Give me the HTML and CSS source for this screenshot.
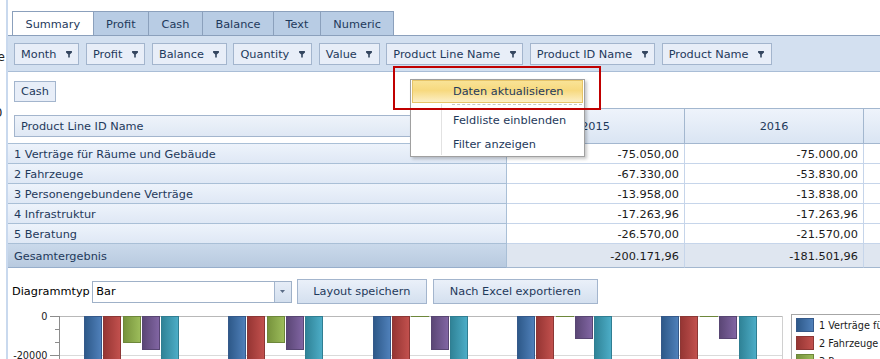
FILE: index.html
```html
<!DOCTYPE html>
<html lang="de">
<head>
<meta charset="utf-8">
<title>Pivot Grid</title>
<link rel="stylesheet" href="styles.css">
</head>
<body>
<div class="page">
  <div class="side-clip">
    <div class="clip-a">Preise</div>
    <div class="clip-b">100</div>
  </div>
  <div class="main">
    <div class="tabs">
      <div class="tab active">Summary</div>
      <div class="tab">Profit</div>
      <div class="tab">Cash</div>
      <div class="tab">Balance</div>
      <div class="tab tab-text">Text</div>
      <div class="tab">Numeric</div>
    </div>
    <div class="filters">
      <div class="field">Month <svg class="funnel" viewBox="0 0 6 7"><path d="M0 .5Q0 0 .5 0H5.5Q6 0 6 .5V1.6L3.8 3.4V6.6H2.2V3.4L0 1.6Z"/></svg></div>
      <div class="field">Profit <svg class="funnel" viewBox="0 0 6 7"><path d="M0 .5Q0 0 .5 0H5.5Q6 0 6 .5V1.6L3.8 3.4V6.6H2.2V3.4L0 1.6Z"/></svg></div>
      <div class="field">Balance <svg class="funnel" viewBox="0 0 6 7"><path d="M0 .5Q0 0 .5 0H5.5Q6 0 6 .5V1.6L3.8 3.4V6.6H2.2V3.4L0 1.6Z"/></svg></div>
      <div class="field">Quantity <svg class="funnel" viewBox="0 0 6 7"><path d="M0 .5Q0 0 .5 0H5.5Q6 0 6 .5V1.6L3.8 3.4V6.6H2.2V3.4L0 1.6Z"/></svg></div>
      <div class="field">Value <svg class="funnel" viewBox="0 0 6 7"><path d="M0 .5Q0 0 .5 0H5.5Q6 0 6 .5V1.6L3.8 3.4V6.6H2.2V3.4L0 1.6Z"/></svg></div>
      <div class="field">Product Line Name <svg class="funnel" viewBox="0 0 6 7"><path d="M0 .5Q0 0 .5 0H5.5Q6 0 6 .5V1.6L3.8 3.4V6.6H2.2V3.4L0 1.6Z"/></svg></div>
      <div class="field">Product ID Name <svg class="funnel" viewBox="0 0 6 7"><path d="M0 .5Q0 0 .5 0H5.5Q6 0 6 .5V1.6L3.8 3.4V6.6H2.2V3.4L0 1.6Z"/></svg></div>
      <div class="field">Product Name <svg class="funnel" viewBox="0 0 6 7"><path d="M0 .5Q0 0 .5 0H5.5Q6 0 6 .5V1.6L3.8 3.4V6.6H2.2V3.4L0 1.6Z"/></svg></div>
    </div>
    <div class="pivot-area">
      <div class="data-fields"><div class="field data-field">Cash</div></div>
      <table class="pivot">
        <colgroup><col class="c-row"><col class="c-val"><col class="c-val2"><col class="c-rest"></colgroup>
        <thead>
          <tr>
            <th class="row-field-cell"><div class="field row-field">Product Line ID Name</div></th>
            <th class="col-head">2015</th>
            <th class="col-head">2016</th>
            <th class="col-head"></th>
          </tr>
        </thead>
        <tbody>
          <tr><th>1 Verträge für Räume und Gebäude</th><td>-75.050,00</td><td>-75.000,00</td><td></td></tr>
          <tr><th>2 Fahrzeuge</th><td>-67.330,00</td><td>-53.830,00</td><td></td></tr>
          <tr><th>3 Personengebundene Verträge</th><td>-13.958,00</td><td>-13.838,00</td><td></td></tr>
          <tr><th>4 Infrastruktur</th><td>-17.263,96</td><td>-17.263,96</td><td></td></tr>
          <tr><th>5 Beratung</th><td>-26.570,00</td><td>-21.570,00</td><td></td></tr>
          <tr class="total"><th>Gesamtergebnis</th><td>-200.171,96</td><td>-181.501,96</td><td></td></tr>
        </tbody>
      </table>
    </div>
    <div class="chart-toolbar">
      <span class="tb-label">Diagrammtyp</span>
      <div class="select">
        <span class="select-value">Bar</span>
        <span class="select-btn"><svg width="5" height="3" viewBox="0 0 5 3"><path d="M0 0H5L2.5 3Z" fill="#5a6c86"/></svg></span>
      </div>
      <div class="btn btn-layout">Layout speichern</div>
      <div class="btn btn-excel">Nach Excel exportieren</div>
    </div>
    <svg class="chart" width="872" height="60" viewBox="8 306 872 60">
      <defs>
        <linearGradient id="gb" x1="0" x2="1" y1="0" y2="0"><stop offset="0" stop-color="#2d5888"/><stop offset="1" stop-color="#5081bb"/></linearGradient>
        <linearGradient id="gr" x1="0" x2="1" y1="0" y2="0"><stop offset="0" stop-color="#953533"/><stop offset="1" stop-color="#c3514e"/></linearGradient>
        <linearGradient id="gg" x1="0" x2="1" y1="0" y2="0"><stop offset="0" stop-color="#76923c"/><stop offset="1" stop-color="#9dbd5b"/></linearGradient>
        <linearGradient id="gp" x1="0" x2="1" y1="0" y2="0"><stop offset="0" stop-color="#5a4675"/><stop offset="1" stop-color="#8266a4"/></linearGradient>
        <linearGradient id="gt" x1="0" x2="1" y1="0" y2="0"><stop offset="0" stop-color="#2f8296"/><stop offset="1" stop-color="#4daec8"/></linearGradient>
      </defs>
      <g class="axis">
        <line x1="60" y1="316.5" x2="782" y2="316.5" stroke="#b8b8b8"/>
        <line x1="60" y1="355.5" x2="782" y2="355.5" stroke="#dadada"/>
        <line x1="782.5" y1="316" x2="782.5" y2="370" stroke="#d0d0d0"/>
        <line x1="59.5" y1="316" x2="59.5" y2="370" stroke="#8c8c8c"/>
        <line x1="50" y1="316.5" x2="60" y2="316.5" stroke="#8c8c8c"/>
        <line x1="50" y1="355.5" x2="60" y2="355.5" stroke="#8c8c8c"/>
        <line x1="55" y1="329.5" x2="60" y2="329.5" stroke="#8c8c8c"/>
        <line x1="55" y1="342.5" x2="60" y2="342.5" stroke="#8c8c8c"/>
        <text x="47.5" y="319.5" text-anchor="end" class="ax">0</text>
        <text x="47.5" y="358.5" text-anchor="end" class="ax">-20000</text>
      </g>
      <g class="bars">
        <rect x="84.5" y="316.5" width="17" height="60" fill="url(#gb)" stroke="#35598a"/>
        <rect x="103.5" y="316.5" width="17" height="60" fill="url(#gr)" stroke="#8c3735"/>
        <rect x="123.5" y="316.5" width="17" height="26" fill="url(#gg)" stroke="#6d873a"/>
        <rect x="142.5" y="316.5" width="17" height="33" fill="url(#gp)" stroke="#584673"/>
        <rect x="161.5" y="316.5" width="17" height="60" fill="url(#gt)" stroke="#307e92"/>

        <rect x="228.5" y="316.5" width="17" height="60" fill="url(#gb)" stroke="#35598a"/>
        <rect x="247.5" y="316.5" width="17" height="60" fill="url(#gr)" stroke="#8c3735"/>
        <rect x="267.5" y="316.5" width="17" height="26" fill="url(#gg)" stroke="#6d873a"/>
        <rect x="286.5" y="316.5" width="17" height="33" fill="url(#gp)" stroke="#584673"/>
        <rect x="305.5" y="316.5" width="17" height="43" fill="url(#gt)" stroke="#307e92"/>

        <rect x="373.5" y="316.5" width="17" height="60" fill="url(#gb)" stroke="#35598a"/>
        <rect x="392.5" y="316.5" width="17" height="60" fill="url(#gr)" stroke="#8c3735"/>
        <line x1="411" y1="316.5" x2="429" y2="316.5" stroke="#6d873a"/>
        <rect x="431.5" y="316.5" width="17" height="33" fill="url(#gp)" stroke="#584673"/>
        <rect x="450.5" y="316.5" width="17" height="60" fill="url(#gt)" stroke="#307e92"/>

        <rect x="517.5" y="316.5" width="17" height="60" fill="url(#gb)" stroke="#35598a"/>
        <rect x="536.5" y="316.5" width="17" height="60" fill="url(#gr)" stroke="#8c3735"/>
        <line x1="556" y1="316.5" x2="574" y2="316.5" stroke="#6d873a"/>
        <rect x="575.5" y="316.5" width="17" height="22" fill="url(#gp)" stroke="#584673"/>
        <rect x="594.5" y="316.5" width="17" height="60" fill="url(#gt)" stroke="#307e92"/>

        <rect x="661.5" y="316.5" width="17" height="60" fill="url(#gb)" stroke="#35598a"/>
        <rect x="680.5" y="316.5" width="17" height="60" fill="url(#gr)" stroke="#8c3735"/>
        <line x1="700" y1="316.5" x2="718" y2="316.5" stroke="#6d873a"/>
        <rect x="719.5" y="316.5" width="17" height="22" fill="url(#gp)" stroke="#584673"/>
        <rect x="739.5" y="316.5" width="17" height="60" fill="url(#gt)" stroke="#307e92"/>
      </g>
      <g class="legend">
        <rect x="791.5" y="314.5" width="120" height="80" fill="#fff" stroke="#a6a6a6"/>
        <rect x="796.5" y="318.5" width="17" height="13" fill="url(#gb)" stroke="#35598a"/>
        <text x="819" y="329" class="lg">1 Verträge für Räume und Gebäude</text>
        <rect x="796.5" y="336.5" width="17" height="13" fill="url(#gr)" stroke="#8c3735"/>
        <text x="819" y="347" class="lg">2 Fahrzeuge</text>
        <rect x="796.5" y="354.5" width="17" height="13" fill="url(#gg)" stroke="#6d873a"/>
        <text x="819" y="365" class="lg">3 Personengebundene Verträge</text>
      </g>
    </svg>
  </div>
  <div class="context-menu">
    <div class="menu-item hot">Daten aktualisieren</div>
    <div class="menu-sep"></div>
    <div class="menu-item">Feldliste einblenden</div>
    <div class="menu-item">Filter anzeigen</div>
  </div>
  <div class="annotation"></div>
</div>
</body>
</html>
```

FILE: styles.css
```css
* { box-sizing: border-box; }
html, body { margin: 0; padding: 0; overflow: hidden; background: #fff; }
body {
  font-family: "DejaVu Sans", Verdana, sans-serif;
  font-size: 11.3px;
  color: #1e395b;
}
.page {
  position: relative;
  display: flex;
  width: 880px;
  height: 359px;
  overflow: hidden;
}
.side-clip {
  flex: none;
  width: 6px;
  overflow: hidden;
  direction: rtl;
  font-size: 12px;
  line-height: 16px;
  color: #222;
  white-space: nowrap;
}
.clip-a { margin-top: 49px; padding-right: 1px; }
.clip-b { margin-top: 40px; padding-right: 3.5px; }

.main {
  flex: 1;
  min-width: 0;
  border-left: 2px solid #c9d9ee;
  padding-top: 11px;
  overflow: hidden;
}

/* tabs */
.tabs { display: flex; height: 24px; padding-left: 4px; }
.tab {
  display: flex;
  align-items: center;
  padding: 1px 12.5px 0;
  border: 1px solid #8ba0bc;
  border-left: none;
  border-bottom: none;
  background: #b8cce4;
  white-space: nowrap;
}
.tab:first-child { border-left: 1px solid #8ba0bc; }
.tab.active { background: #fff; }
.tab-text { padding: 1px 11.5px 0; }

/* filter area */
.filters {
  display: flex;
  gap: 6.5px;
  padding: 7px 6px 6px;
  background: #d3e0f0;
  border-top: 1px solid #8ba0bc;
  border-bottom: 1px solid #a9bdd6;
}
.field {
  flex: none;
  display: inline-flex;
  align-items: center;
  gap: 9.5px;
  height: 22px;
  padding: 0 6px 0 6px;
  border: 1px solid #a3b5cd;
  background: #e8eef8;
  white-space: nowrap;
}
.funnel { width: 6px; height: 7px; fill: #34465f; margin-right: 0.5px; }

/* pivot */
.pivot-area { padding-top: 9px; }
.data-fields { padding-left: 6px; }
.data-field { height: 21px; }

.pivot {
  margin-top: 6px;
  border-collapse: separate;
  border-spacing: 0;
  table-layout: fixed;
  width: 1056px;
}
.c-row { width: 499px; }
.c-val { width: 178px; }
.c-val2 { width: 179px; }
.c-rest { width: 200px; }
.pivot th, .pivot td {
  padding: 0;
  font-weight: normal;
  white-space: nowrap;
  overflow: hidden;
}
.pivot thead th { height: 36px; }
.pivot thead .row-field-cell {
  text-align: left;
  vertical-align: top;
  padding: 7px 0 0 6px;
  background: #fff;
  border-bottom: 1px solid #a9bfd6;
  border-right: 1px solid #a3b7cf;
}
.row-field {
  width: 486px;
  background: linear-gradient(#eef3fa, #dfe8f4);
}
.col-head {
  text-align: center;
  vertical-align: middle;
  border-top: 1px solid #a3b7cf;
  border-right: 1px solid #a3b7cf;
  border-bottom: 1px solid #a3b7cf;
  background: linear-gradient(#eef3fb, #dae5f3);
}
.pivot tbody th {
  height: 20px;
  text-align: left;
  padding: 1px 0 0 6px;
  background: linear-gradient(#edf3fb, #dfe8f5);
  border-right: 1px solid #a9bfd6;
  border-bottom: 1px solid #a9bfd6;
}
.pivot tbody td {
  height: 20px;
  text-align: right;
  padding: 1px 5px 0 0;
  color: #1a1a1a;
  background: #fff;
  border-right: 1px solid #c6d5ea;
  border-bottom: 1px solid #c6d5ea;
}
.pivot tbody .total th {
  height: 24px;
  background: linear-gradient(#cad9eb, #b8cadf);
  border-bottom: 1px solid #97aecb;
}
.pivot tbody .total td {
  height: 24px;
  background: #dfe6f0;
  border-bottom: 1px solid #a3b7cf;
}

/* chart toolbar */
.chart-toolbar {
  display: flex;
  align-items: center;
  height: 25px;
  margin-top: 11px;
  padding-left: 4px;
}
.tb-label { color: #000; margin-right: 2px; white-space: nowrap; }
.select {
  display: flex;
  width: 200px;
  height: 22px;
  border: 1px solid #9fb1c8;
  background: #fff;
}
.select-value {
  flex: 1;
  display: flex;
  align-items: center;
  padding-left: 3.5px;
  color: #000;
}
.select-btn {
  width: 17px;
  display: flex;
  align-items: center;
  justify-content: center;
  border-left: 1px solid #a3b5cd;
  background: linear-gradient(#e6edf7, #d3dfee);
}
.btn {
  height: 25px;
  display: flex;
  align-items: center;
  justify-content: center;
  border: 1px solid #a3b5cd;
  background: linear-gradient(#eaf0f9, #d4e0ef);
  white-space: nowrap;
}
.btn-layout { width: 130px; margin-left: 5px; }
.btn-excel { width: 165px; margin-left: 6px; }

/* chart */
.chart { display: block; margin-top: 2px; }
.ax { font-family: "DejaVu Sans", Verdana, sans-serif; font-size: 9.7px; fill: #1a1a1a; }
.lg { font-family: "DejaVu Sans", Verdana, sans-serif; font-size: 9.7px; fill: #1a1a1a; }

/* context menu */
.context-menu {
  position: absolute;
  left: 410px;
  top: 79px;
  width: 175px;
  height: 78px;
  padding: 0 1px;
  background: #fff;
  border: 1px solid #a0a0a0;
  box-shadow: 2px 2px 3px rgba(0, 0, 0, 0.22);
  z-index: 5;
}
.context-menu::before {
  content: "";
  position: absolute;
  left: 30px;
  top: 24px;
  bottom: 1px;
  width: 1px;
  background: #e2e2e2;
}
.menu-item {
  position: relative;
  height: 24px;
  display: flex;
  align-items: center;
  padding-left: 41px;
  white-space: nowrap;
}
.menu-item.hot {
  height: 23px;
  padding-left: 40px;
  border: 1px solid #e6c468;
  background: linear-gradient(#f9e396, #f7d97f 45%, #fcefc6);
}
.menu-sep {
  margin: 1px 1px 3px 40px;
  border-top: 1px dashed #c6c6c6;
}

/* annotation */
.annotation {
  position: absolute;
  left: 393px;
  top: 66px;
  width: 208px;
  height: 44px;
  border: 2px solid #c00000;
  pointer-events: none;
  z-index: 6;
}
```
